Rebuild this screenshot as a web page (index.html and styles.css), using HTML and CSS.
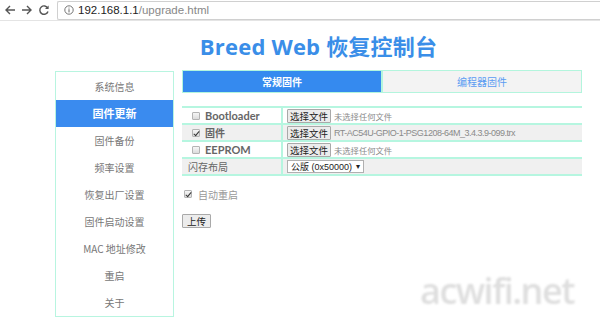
FILE: index.html
```html
<!DOCTYPE html>
<html>
<head>
<meta charset="utf-8">
<link rel="stylesheet" href="styles.css">
</head>
<body>
<div class="chrome">
  <svg class="nav" width="12" height="12" viewBox="0 0 12 12"><path d="M11 6H2M6 2L2 6l4 4" fill="none" stroke="#555" stroke-width="1.4"/></svg>
  <svg class="nav" width="12" height="12" viewBox="0 0 12 12"><path d="M1 6h9M6 2l4 4-4 4" fill="none" stroke="#555" stroke-width="1.4"/></svg>
  <svg class="nav" width="12" height="12" viewBox="0 0 12 12"><path d="M9.8 4.2A4.2 4.2 0 1 0 10 7.5" fill="none" stroke="#555" stroke-width="1.4"/><path d="M10.6 1.5v3.6H7z" fill="#555"/></svg>
  <div class="address">
    <svg width="10" height="10" viewBox="0 0 10 10"><circle cx="5" cy="5" r="4.2" fill="none" stroke="#666" stroke-width="0.9"/><path d="M5 4.2v3.2M5 2.6v0.9" stroke="#666" stroke-width="1"/></svg>
    <span class="host">192.168.1.1</span><span class="path">/upgrade.html</span>
  </div>
</div>
<div class="page">
  <h1 class="title">Breed Web 恢复控制台</h1>
  <div class="layout">
    <ul class="menu">
      <li>系统信息</li>
      <li class="active">固件更新</li>
      <li>固件备份</li>
      <li>频率设置</li>
      <li>恢复出厂设置</li>
      <li>固件启动设置</li>
      <li>MAC 地址修改</li>
      <li>重启</li>
      <li>关于</li>
    </ul>
    <div class="main">
      <div class="tabs">
        <div class="tab tab-active">常规固件</div>
        <div class="tab">编程器固件</div>
      </div>
      <table class="files">
        <colgroup><col class="col-lbl"><col class="col-val"></colgroup>
        <tr>
          <td class="lbl"><div class="cell"><input type="checkbox" class="cb"><b class="en">Bootloader</b></div></td>
          <td class="val"><div class="cell"><span class="btn">选择文件</span><span class="fname">未选择任何文件</span></div></td>
        </tr>
        <tr class="alt">
          <td class="lbl"><div class="cell"><input type="checkbox" class="cb" checked><b class="zh">固件</b></div></td>
          <td class="val"><div class="cell"><span class="btn">选择文件</span><span class="fname fw">RT-AC54U-GPIO-1-PSG1208-64M_3.4.3.9-099.trx</span></div></td>
        </tr>
        <tr>
          <td class="lbl"><div class="cell"><input type="checkbox" class="cb"><b class="en">EEPROM</b></div></td>
          <td class="val"><div class="cell"><span class="btn">选择文件</span><span class="fname">未选择任何文件</span></div></td>
        </tr>
        <tr class="alt">
          <td class="lbl plain"><div class="cell">闪存布局</div></td>
          <td class="val"><div class="cell"><span class="select">公版 (0x50000)<i>▾</i></span></div></td>
        </tr>
      </table>
      <label class="reboot"><input type="checkbox" class="cb" checked>自动重启</label>
      <div class="actions"><span class="btn upload">上传</span></div>
    </div>
  </div>
</div>
<div class="watermark">acwifi.net</div>
</body>
</html>
```
FILE: styles.css
```css
html, body {
  margin: 0;
  padding: 0;
  background: #fff;
  font-family: "Noto Sans CJK SC", "Noto Sans", sans-serif;
}
body {
  width: 600px;
  height: 329px;
  overflow: hidden;
  position: relative;
}
.chrome {
  height: 21px;
  display: flex;
  align-items: center;
  border-bottom: 1px solid #e4e4e4;
  padding-left: 4px;
  box-sizing: border-box;
}
.nav {
  margin-right: 5px;
}
.address {
  margin-left: 2px;
  flex: 1;
  height: 17px;
  border: 1px solid #d0d0d0;
  border-right: none;
  border-radius: 2px 0 0 2px;
  display: flex;
  align-items: center;
  padding-left: 6px;
  font-family: "Liberation Sans", Arial, sans-serif;
  font-size: 11.5px;
}
.address svg {
  margin-right: 4px;
}
.host { color: #222; }
.path { color: #888; }

.page {
  width: 527px;
  margin-left: 55px;
}
.title {
  margin: 10px 0 0;
  height: 30px;
  line-height: 30px;
  text-align: center;
  color: #3a8ee8;
  font-family: "Open Sans", "Noto Sans CJK SC", sans-serif;
  font-weight: 700;
  font-size: 22px;
  letter-spacing: 0.2px;
}
.layout {
  display: flex;
  gap: 8px;
  margin-top: 10px;
}
.menu {
  list-style: none;
  margin: 0;
  padding: 1px 0 0;
  width: 119px;
  height: 246px;
  box-sizing: border-box;
  border: 1px solid #b8f5e0;
}
.menu li {
  height: 27px;
  line-height: 27px;
  text-align: center;
  font-size: 10px;
  color: #777;
}
.menu li.active {
  background: #3a8bef;
  color: #fff;
  font-weight: 700;
  font-size: 11px;
}
.main {
  flex: 1;
}
.tabs {
  display: flex;
  height: 23px;
  margin-top: -1px;
}
.tab {
  flex: 1;
  text-align: center;
  line-height: 21px;
  font-size: 10px;
  color: #5b9cf2;
  background: #f3f3f3;
  border: 1px solid #b3f5dd;
}
.tab-active {
  background: #358aef;
  color: #fff;
  font-weight: 700;
}
.files {
  margin-top: 13px;
  width: 400px;
  border-collapse: collapse;
  table-layout: fixed;
}
.col-lbl { width: 100px; }
.files td {
  padding: 0;
  border-top: 2px solid #b6f6e0;
  border-bottom: 2px solid #b6f6e0;
  vertical-align: middle;
  overflow: hidden;
}
.cell {
  height: 15px;
  display: flex;
  align-items: center;
  white-space: nowrap;
}
.files td.lbl {
  border-right: 2px solid #b6f6e0;
  padding-left: 9px;
  color: #666;
}
.files td.lbl.plain {
  padding-left: 6px;
  font-size: 10px;
}
.files td.val {
  padding-left: 4px;
}
.files tr.alt td {
  background: #f0f0f0;
}
.en {
  font-family: "Lato", "Liberation Sans", sans-serif;
  font-weight: 700;
  font-size: 11px;
}
.zh {
  font-weight: 700;
  font-size: 10px;
}
.cb {
  -webkit-appearance: none;
  appearance: none;
  position: relative;
  width: 8px;
  height: 8px;
  margin: 0 5px 0 1px;
  border: 1px solid #b4b4b4;
  border-radius: 1px;
  background: linear-gradient(#f6f6f6, #dcdcdc);
  flex: none;
}
.cb:checked::after {
  content: "";
  position: absolute;
  left: 2px;
  top: 0px;
  width: 2px;
  height: 5px;
  border: solid #333;
  border-width: 0 1.5px 1.5px 0;
  transform: rotate(40deg);
}
.btn {
  display: inline-block;
  height: 12px;
  line-height: 12px;
  padding: 0 2px;
  border: 1px solid #a9a9a9;
  background: #ececec;
  border-radius: 1px;
  font-size: 9.5px;
  color: #222;
}
.fname {
  margin-left: 3px;
  font-size: 8.3px;
  color: #8a8a8a;
}
.fname.fw {
  font-family: "Liberation Sans", Arial, sans-serif;
  font-size: 9px;
  letter-spacing: -0.5px;
}
.select {
  display: flex;
  align-items: center;
  height: 11px;
  padding: 0 3px;
  border: 1px solid #b0b0b0;
  background: #fff;
  font-size: 9px;
  color: #222;
  font-family: "Liberation Sans", "Noto Sans CJK SC", sans-serif;
}
.select i {
  font-style: normal;
  font-size: 8px;
  margin-left: 4px;
}
.reboot {
  display: flex;
  align-items: center;
  margin-top: 11px;
  font-size: 10px;
  color: #999;
  height: 14px;
}
.reboot .cb {
  margin-left: 2px;
  margin-right: 6px;
}
.actions {
  margin-top: 5px;
}
.upload {
  padding: 0 4px;
}
.watermark {
  position: absolute;
  left: 420px;
  top: 273px;
  line-height: 36px;
  font-family: "Open Sans", sans-serif;
  font-weight: 600;
  font-size: 36px;
  color: #dedede;
  filter: blur(0.8px);
  letter-spacing: -1.5px;
}
```
